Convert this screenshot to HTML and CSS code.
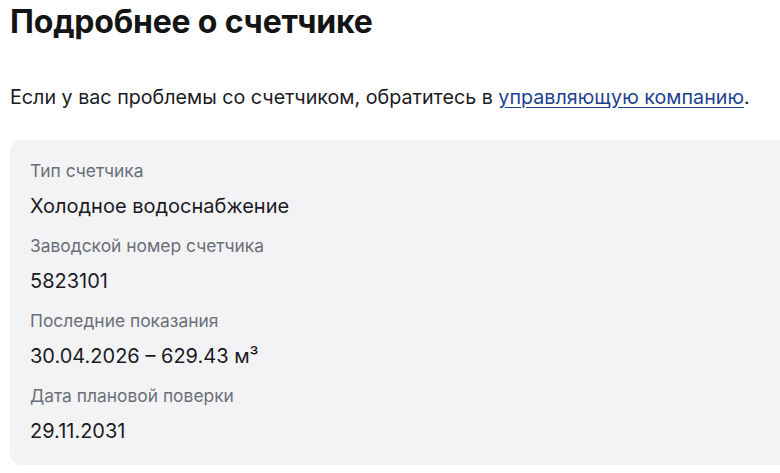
FILE: index.html
```html
<!DOCTYPE html>
<html lang="ru">
<head>
<meta charset="utf-8">
<link rel="stylesheet" href="styles.css">
</head>
<body>
<main class="page">
  <h1 class="title">Подробнее о счетчике</h1>
  <p class="note">Если у вас проблемы со счетчиком, обратитесь в <a class="link" href="#">управляющую компанию</a>.</p>
  <section class="card">
    <div class="item">
      <div class="label">Тип счетчика</div>
      <div class="value">Холодное водоснабжение</div>
    </div>
    <div class="item">
      <div class="label">Заводской номер счетчика</div>
      <div class="value">5823101</div>
    </div>
    <div class="item">
      <div class="label">Последние показания</div>
      <div class="value">30.04.2026 – 629.43 м³</div>
    </div>
    <div class="item">
      <div class="label">Дата плановой поверки</div>
      <div class="value">29.11.2031</div>
    </div>
  </section>
</main>
</body>
</html>
```

FILE: styles.css
```css
* { box-sizing: border-box; }
html, body { margin: 0; padding: 0; background: #fff; }
body {
  font-family: Inter, "Noto Sans", sans-serif;
  color: #1b1b1f;
  overflow: hidden;
}
.page {
  padding: 4px 0 0 10px;
  width: 800px;
}
.title {
  margin: 0;
  font-size: 32px;
  line-height: 36px;
  font-weight: 700;
  letter-spacing: -0.2px;
  color: #141414;
}
.note {
  margin: 45px 0 0 0;
  font-size: 19.7px;
  line-height: 24px;
  color: #1b1b1f;
}
.link {
  color: #1d3f93;
  text-decoration: underline;
  text-underline-offset: 3px;
}
.card {
  margin-top: 31px;
  background: #f3f3f6;
  border-radius: 12px;
  padding: 19px 20px 22px 20px;
  display: flex;
  flex-direction: column;
  gap: 16px;
}
.item { display: flex; flex-direction: column; gap: 11px; }
.label {
  font-size: 17.4px;
  line-height: 24px;
  color: #6c6f77;
}
.value {
  font-size: 20px;
  line-height: 24px;
  color: #1b1b1f;
}
```
